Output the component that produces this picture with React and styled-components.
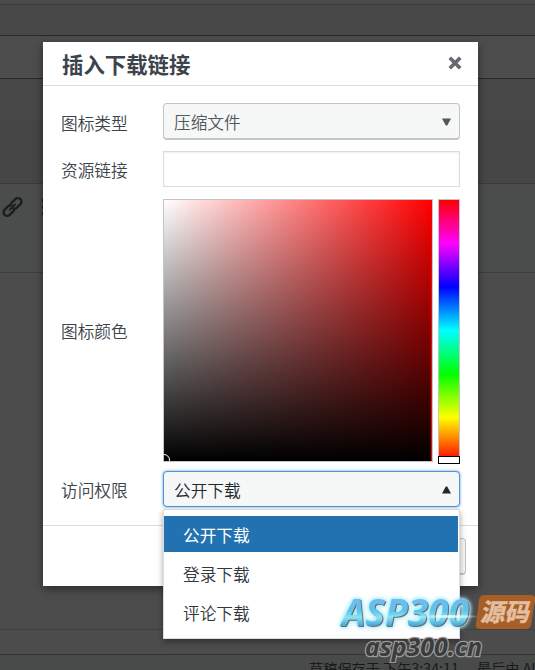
import React, { useState } from 'react';
import styled, { createGlobalStyle } from 'styled-components';

const ICON_TYPES = ['压缩文件'];
const PERMISSIONS = ['公开下载', '登录下载', '评论下载'];

export default function App() {
  const [link, setLink] = useState('');
  const [permission, setPermission] = useState(PERMISSIONS[0]);
  const [isOpen, setIsOpen] = useState(true);

  const handleSelect = (item) => {
    setPermission(item);
    setIsOpen(false);
  };

  return (
    <>
      <GlobalStyle />
      <StEditor>
        <StStrip $height={5} $bg="#4b4b4b" $line="#3c3c3c" />
        <StStrip $height={31} $bg="#484848" $line="#282828" />
        <StStrip $height={43} $bg="#4d4d4d" $line="#282828" />
        <StStrip $height={41} $bg="#484848" $line="#484848" />
        <StStrip $height={64} $bg="#464646" $line="#393b3b" />
        <StToolbar>
          <LinkIcon />
          <ListIcon />
        </StToolbar>
        <StStrip $height={357} $bg="#4c4c4c" $line="#404040" />
        <StStrip $height={25} $bg="#4c4c4c" $line="#353535" />
        <StStatus>
          <span>草稿保存于 下午3:34:11。</span>
          <span>最后由 AI</span>
        </StStatus>
      </StEditor>

      <StDialog role="dialog">
        <StHeader>
          <h2>插入下载链接</h2>
          <StClose type="button" aria-label="close">
            <svg width="14" height="14" viewBox="0 0 14 14">
              <path
                d="M1.8 1.8 12.2 12.2M12.2 1.8 1.8 12.2"
                stroke="#646970"
                strokeWidth="3.7"
              />
            </svg>
          </StClose>
        </StHeader>

        <StForm>
          <StRow $height={37}>
            <StLabel>图标类型</StLabel>
            <StSelect type="button">
              <span>{ICON_TYPES[0]}</span>
              <Arrow />
            </StSelect>
          </StRow>
          <StRow $height={36} $top={11}>
            <StLabel>资源链接</StLabel>
            <StInput value={link} onChange={(e) => setLink(e.target.value)} />
          </StRow>
          <StRow $height={263} $top={12}>
            <StLabel $flat>图标颜色</StLabel>
            <StPicker>
              <StShade>
                <StShadePoint />
              </StShade>
              <StHue>
                <StHuePoint />
              </StHue>
            </StPicker>
          </StRow>
          <StRow $height={36} $top={9}>
            <StLabel>访问权限</StLabel>
            <StSelectBox>
              <StSelect
                type="button"
                $active
                onClick={() => setIsOpen((prev) => !prev)}
              >
                <span>{permission}</span>
                <Arrow up={isOpen} />
              </StSelect>
              {isOpen ? (
                <StMenu>
                  {PERMISSIONS.map((item) => (
                    <StMenuItem
                      key={item}
                      $selected={item === permission}
                      onClick={() => handleSelect(item)}
                    >
                      {item}
                    </StMenuItem>
                  ))}
                </StMenu>
              ) : undefined}
            </StSelectBox>
          </StRow>
        </StForm>

        <StFooter>
          <StCancel type="button" aria-label="cancel" />
        </StFooter>
      </StDialog>

      <Watermark />
    </>
  );
}

function Arrow({ up }) {
  return (
    <svg width="9" height="8" viewBox="0 0 9 8">
      <path
        d={up ? 'M0 7.5H9L5.2 .5H3.8Z' : 'M0 .5H9L5.2 7.5H3.8Z'}
        fill={up ? '#23282d' : '#50575e'}
      />
    </svg>
  );
}

function LinkIcon() {
  return (
    <svg width="25" height="24" viewBox="-.5 0 25 24">
      <g
        transform="rotate(-45 12 12)"
        fill="none"
        stroke="#1b1c1e"
        strokeWidth="2.3"
        strokeLinecap="round"
      >
        <path d="M10.6 15.6H4.4a3.6 3.6 0 0 1 0-7.2H9.4a3.6 3.6 0 0 1 3 1.6" />
        <path d="M13.4 8.4h6.2a3.6 3.6 0 0 1 0 7.2h-5a3.6 3.6 0 0 1-3-1.6" />
        <path d="M8.2 12h7.6" strokeWidth="1.9" />
      </g>
    </svg>
  );
}

function ListIcon() {
  return (
    <svg width="18" height="18" viewBox="0 0 18 18">
      <path d="M0 1h16v3H0zM0 7.5h16v3H0zM0 14h16v3H0z" fill="#1b1c1e" />
    </svg>
  );
}

function Watermark() {
  return (
    <StWatermark width="205" height="90" viewBox="330 580 205 90">
      <defs>
        <linearGradient id="logo" x1="0" y1="0" x2="0" y2="1">
          <stop offset=".2" stopColor="#74b8f2" />
          <stop offset=".5" stopColor="#5cc4ea" />
          <stop offset=".62" stopColor="#8be4f2" />
          <stop offset=".8" stopColor="#3f9fd6" />
        </linearGradient>
        <linearGradient id="shine">
          <stop offset="0" stopColor="#fff" stopOpacity="0" />
          <stop offset=".5" stopColor="#fff" stopOpacity=".9" />
          <stop offset="1" stopColor="#fff" stopOpacity="0" />
        </linearGradient>
      </defs>
      <StLogoText
        x="342"
        y="626"
        textLength="127"
        lengthAdjust="spacingAndGlyphs"
        fill="url(#logo)"
      >
        ASP300
      </StLogoText>
      <ellipse cx="450" cy="616.5" rx="32" ry="1.3" fill="url(#shine)" />
      <path
        d="M484 595H531Q536 595 535 600L531 625Q530 629 526 629H480Q475 629 476 624L479 600Q480 595 484 595Z"
        fill="#a75f27"
      />
      <StTagText transform="translate(480 620.5) skewX(-12)">源码</StTagText>
      <StSiteText x="365" y="656" textLength="117" lengthAdjust="spacingAndGlyphs">
        asp300.cn
      </StSiteText>
    </StWatermark>
  );
}

const GlobalStyle = createGlobalStyle`
  * {
    box-sizing: border-box;
  }

  body {
    margin: 0;
    overflow: hidden;
    background: #4c4c4c;
    color: #3c434a;
    font-family: 'Noto Sans CJK SC', sans-serif;
    font-size: 16.7px;
  }
`;

const StEditor = styled.main`
  display: flex;
  flex-direction: column;
  height: 670px;
  overflow: hidden;
`;

const StStrip = styled.div`
  flex: none;
  height: ${(props) => props.$height}px;
  background: ${(props) => props.$bg};
  border-bottom: 1px solid ${(props) => props.$line};
`;

const StToolbar = styled.div`
  flex: none;
  display: flex;
  align-items: flex-start;
  gap: 17px;
  height: 89px;
  padding: 11px 0 0;
  background: #4a4d4c;
  border-bottom: 1px solid #3d3f3f;

  svg:last-child {
    margin-top: 3px;
  }
`;

const StStatus = styled.footer`
  flex: none;
  display: flex;
  gap: 4px;
  height: 30px;
  padding: 3px 0 0 309px;
  background: #484b4a;
  color: #18191a;
  font-size: 14.2px;
  line-height: 20px;
  white-space: nowrap;
`;

const StDialog = styled.section`
  position: absolute;
  top: 42px;
  left: 43px;
  display: flex;
  flex-direction: column;
  width: 435px;
  height: 544px;
  background: #fff;
  box-shadow: 0 3px 9px rgba(0, 0, 0, 0.45);
`;

const StHeader = styled.header`
  display: flex;
  justify-content: space-between;
  align-items: center;
  height: 44px;
  padding: 0 16px 0 19px;
  border-bottom: 1px solid #dcdcde;

  h2 {
    margin: 0;
    font-size: 21.4px;
    line-height: 30px;
  }
`;

const StClose = styled.button`
  display: flex;
  margin-top: -2px;
  padding: 0;
  border: 0;
  background: none;
`;

const StForm = styled.div`
  height: 439px;
  padding: 17px 18px 0;
`;

const StRow = styled.div`
  display: flex;
  align-items: center;
  height: ${(props) => props.$height}px;
  margin-top: ${(props) => props.$top || 0}px;
`;

const StLabel = styled.label`
  width: 102px;
  padding-top: ${(props) => (props.$flat ? 0 : 2)}px;
  font-weight: 350;
  line-height: 24px;
`;

const StSelectBox = styled.div`
  position: relative;
`;

const StSelect = styled.button`
  display: flex;
  justify-content: space-between;
  align-items: center;
  width: 297px;
  height: ${(props) => (props.$active ? 36 : 37)}px;
  padding: 1px 8px 0 10px;
  border: 1px solid ${(props) => (props.$active ? '#4f94d4' : '#c3c4c7')};
  border-bottom-width: ${(props) => (props.$active ? 1 : 2)}px;
  border-radius: 4px;
  background: #f6f7f7;
  box-shadow: ${(props) => (props.$active ? '0 0 3px #5b9dd9' : 'none')};
  color: ${(props) => (props.$active ? '#23282d' : '#50575e')};
  font: inherit;
  font-weight: 350;
  line-height: 24px;
`;

const StInput = styled.input`
  width: 297px;
  height: 36px;
  padding: 4px 10px;
  border: 1px solid #dcdcde;
  box-shadow: inset 0 1px 2px rgba(0, 0, 0, 0.07);
  font: inherit;
`;

const StPicker = styled.div`
  display: flex;
  gap: 5px;
  height: 263px;
`;

const StShade = styled.div`
  position: relative;
  width: 270px;
  overflow: hidden;
  border: 1px solid #c3c4c7;
  background:
    linear-gradient(#f00, #f00) right / 1px 100% no-repeat,
    linear-gradient(to top, #000, transparent),
    linear-gradient(to right, #fff, #f00);
`;

const StShadePoint = styled.span`
  position: absolute;
  left: -6px;
  bottom: -5px;
  width: 12px;
  height: 12px;
  border: 1px solid #fff;
  border-radius: 50%;
`;

const StHue = styled.div`
  position: relative;
  width: 22px;
  border: 1px solid #c3c4c7;
  background: linear-gradient(#f00, #f0f, #00f, #0ff, #0f0, #ff0, #f00);
`;

const StHuePoint = styled.span`
  position: absolute;
  left: -1px;
  bottom: -3px;
  width: 22px;
  height: 8px;
  border: 1px solid #000;
  background: #fff;
`;

const StMenu = styled.ul`
  position: absolute;
  top: 38px;
  left: 0;
  z-index: 1;
  display: flex;
  flex-direction: column;
  gap: 3px;
  width: 297px;
  height: 130px;
  margin: 0;
  padding: 6px 1px 0 0;
  border: 1px solid #dcdcde;
  background: #fff;
  box-shadow: 0 3px 6px rgba(0, 0, 0, 0.35);
  list-style: none;
`;

const StMenuItem = styled.li`
  height: 36px;
  padding: 1px 19px 0;
  background: ${(props) => (props.$selected ? '#2271b1' : '#fff')};
  color: ${(props) => (props.$selected ? '#fff' : '#32373c')};
  font-weight: ${(props) => (props.$selected ? 400 : 350)};
  line-height: 36px;
  cursor: pointer;
`;

const StFooter = styled.footer`
  display: flex;
  justify-content: flex-end;
  height: 61px;
  padding: 12px;
  border-top: 1px solid #dcdcde;
`;

const StCancel = styled.button`
  width: 60px;
  height: 37px;
  border: 1px solid #c3c4c7;
  border-bottom-width: 2px;
  border-radius: 4px;
  background: #f6f7f7;
`;

const StWatermark = styled.svg`
  position: absolute;
  top: 580px;
  left: 330px;
  z-index: 2;
  pointer-events: none;
`;

const StLogoText = styled.text`
  filter: drop-shadow(1.5px 1.5px 0 #74686a)
    drop-shadow(0 0 2px #a5ecfa) drop-shadow(0 0 1.5px #a5ecfa);
  font-family: 'Open Sans', sans-serif;
  font-size: 38px;
  font-weight: 700;
  font-style: italic;
`;

const StTagText = styled.text`
  fill: #e3bfa2;
  stroke: #e3bfa2;
  stroke-width: 0.5px;
  font-size: 24.5px;
  font-weight: 700;
`;

const StSiteText = styled.text`
  fill: #3c3c3c;
  stroke: #9a9a9a;
  stroke-width: 2.6px;
  paint-order: stroke;
  font-family: 'Open Sans', sans-serif;
  font-size: 25px;
  font-weight: 700;
  font-style: italic;
`;
